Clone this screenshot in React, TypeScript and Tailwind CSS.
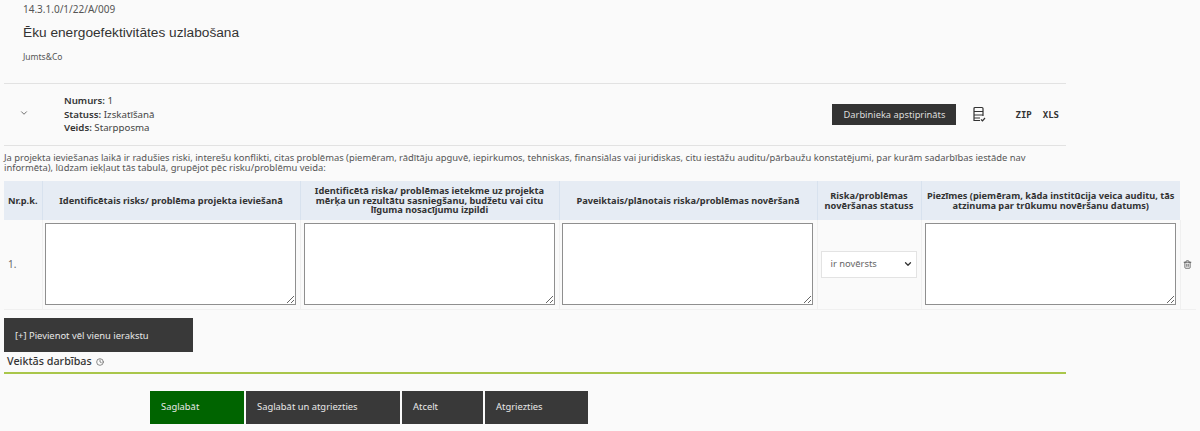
import { ChevronDown, Clock, Trash2 } from 'lucide-react'

const plex = 'font-["Noto_Sans","Open_Sans",sans-serif]'

function NoteBox() {
  return <textarea className="block w-full h-[82px] bg-white border border-[#8f8f8f] outline-none resize" />
}

function ActionButton({ label, width, green }: { label: string; width: string; green?: boolean }) {
  return (
    <button className={`${width} h-[33px] pl-[11px] pt-[1px] text-left text-[9.4px] text-[#e8e8e8] ${green ? 'bg-[#006400]' : 'bg-[#393939]'}`}>
      {label}
    </button>
  )
}

export default function App() {
  return (
    <div className={`h-[431px] overflow-hidden bg-[#fafafa] text-[#444] ${plex}`}>
      {/* Project header */}
      <div className="h-[83px] pl-[23px] pt-[2px]">
        <p className="text-[10px] leading-[14px] text-[#555]">14.3.1.0/1/22/A/009</p>
        <h1 className="mt-[8px] font-['Liberation_Sans',sans-serif] text-[13.7px] leading-[18px] text-[#333]">
          Ēku energoefektivitātes uzlabošana
        </h1>
        <p className="mt-[9px] text-[8.5px] leading-[12px] text-[#555]">Jumts&amp;Co</p>
      </div>

      {/* Report summary */}
      <div className="ml-[4px] flex h-[63px] w-[1062px] items-center border-y border-[#e2e2e2]">
        <ChevronDown className="ml-[15px] mt-[-4px] h-[10px] w-[10px] text-[#555]" />
        <div className="ml-[35px] text-[9.7px] leading-[13.5px]">
          <p><b className="font-semibold text-[#333]">Numurs:</b> 1</p>
          <p><b className="font-semibold text-[#333]">Statuss:</b> Izskatīšanā</p>
          <p><b className="font-semibold text-[#333]">Veids:</b> Starpposma</p>
        </div>
        <div className="ml-auto flex h-[21px] w-[124px] items-center justify-center bg-[#333] text-[9.3px] text-[#ddd]">
          Darbinieka apstiprināts
        </div>
        <svg viewBox="0 0 16 16" className="ml-[15px] mt-[-2px] h-[16px] w-[16px]" fill="none" stroke="#333" strokeWidth="1.2">
          <path d="M9 14.5H3V2.5a1 1 0 0 1 1-1h7a1 1 0 0 1 1 1V10M3 5.5h9M3 9h9M3 12h6" />
          <path d="M10 13.5l1.5 1.3 2.5-2.8" />
        </svg>
        <span className="ml-[28px] mt-[2px] font-['DejaVu_Sans_Mono',monospace] text-[9px] font-bold text-[#333]">ZIP</span>
        <span className="ml-[11px] mr-[7px] mt-[2px] font-['DejaVu_Sans_Mono',monospace] text-[9px] font-bold text-[#333]">XLS</span>
      </div>

      <p className="ml-[4px] mt-[7px] w-[1060px] text-[9.4px] leading-[10px] text-[#555]">
        Ja projekta ieviešanas laikā ir radušies riski, interešu konflikti, citas problēmas (piemēram, rādītāju apguvē, iepirkumos, tehniskas, finansiālas vai juridiskas, citu iestāžu auditu/pārbaužu konstatējumi, par kurām sadarbības iestāde nav informēta), lūdzam iekļaut tās tabulā, grupējot pēc risku/problēmu veida:
      </p>

      {/* Risk table */}
      <table className="ml-[4px] mt-[8px] w-[1192px] table-fixed border-collapse text-[9.25px]">
        <colgroup>
          <col className="w-[38px]" />
          <col className="w-[258px]" />
          <col className="w-[259px]" />
          <col className="w-[258px]" />
          <col className="w-[104px]" />
          <col className="w-[259px]" />
          <col className="w-[16px]" />
        </colgroup>
        <thead>
          <tr className="h-[39px] bg-[#e6ecf4] text-[#333]">
            <th className="border-r border-[#d8e2ee] px-[1px] font-bold leading-[9.5px]">Nr.p.k.</th>
            <th className="border-r border-[#d8e2ee] px-[4px] font-bold leading-[9.5px]">Identificētais risks/ problēma projekta ieviešanā</th>
            <th className="border-r border-[#d8e2ee] px-[4px] font-bold leading-[9.5px]">Identificētā riska/ problēmas ietekme uz projekta mērķa un rezultātu sasniegšanu, budžetu vai citu līguma nosacījumu izpildi</th>
            <th className="border-r border-[#d8e2ee] px-[4px] font-bold leading-[9.5px]">Paveiktais/plānotais riska/problēmas novēršanā</th>
            <th className="border-r border-[#d8e2ee] px-[4px] font-bold leading-[10px]">Riska/problēmas novēršanas statuss</th>
            <th className="px-[4px] font-bold leading-[10px]">Piezīmes (piemēram, kāda institūcija veica auditu, tās atzinuma par trūkumu novēršanu datums)</th>
            <th className="bg-[#fafafa]" />
          </tr>
        </thead>
        <tbody>
          <tr className="h-[89px] border-b border-[#f0f0f0]">
            <td className="border-r border-[#f0f0f0] pl-[4px] pt-[1px] text-[10px] text-[#666]">1.</td>
            <td className="border-r border-[#f0f0f0] pl-[2px] pr-[4px]"><NoteBox /></td>
            <td className="border-r border-[#f0f0f0] pl-[3px] pr-[4px]"><NoteBox /></td>
            <td className="border-r border-[#f0f0f0] pl-[2px] pr-[4px]"><NoteBox /></td>
            <td className="border-r border-[#f0f0f0] pl-[3px] pr-[4px]">
              <div className="flex h-[27px] items-center justify-between border border-[#e3e3e3] bg-white pl-[9px] pr-[3px] text-[9.4px] text-[#666]">
                ir novērsts
                <ChevronDown className="h-[10px] w-[10px] text-[#333]" strokeWidth={3} />
              </div>
            </td>
            <td className="border-r border-[#f0f0f0] pl-[3px] pr-[4px]"><NoteBox /></td>
            <td className="pr-[2px] text-center">
              <Trash2 className="mx-auto h-[9px] w-[9px] text-[#444]" />
            </td>
          </tr>
        </tbody>
      </table>

      <button className="ml-[4px] mt-[8px] block h-[34px] w-[189px] bg-[#393939] pl-[11px] pt-[3px] text-left text-[9.4px] text-[#e8e8e8]">
        [+] Pievienot vēl vienu ierakstu
      </button>

      <div className="ml-[4px] flex h-[22px] w-[1062px] items-center gap-[4px] border-b-2 border-[#a9c64a] pl-[3px]">
        <span className="text-[10.75px] font-medium text-[#333]">Veiktās darbības</span>
        <Clock className="h-[8px] w-[8px] text-[#555]" />
      </div>

      <div className="ml-[150px] mt-[17px] flex gap-[2px]">
        <ActionButton label="Saglabāt" width="w-[94px]" green />
        <ActionButton label="Saglabāt un atgriezties" width="w-[154px]" />
        <ActionButton label="Atcelt" width="w-[81px]" />
        <ActionButton label="Atgriezties" width="w-[103px]" />
      </div>
    </div>
  )
}
